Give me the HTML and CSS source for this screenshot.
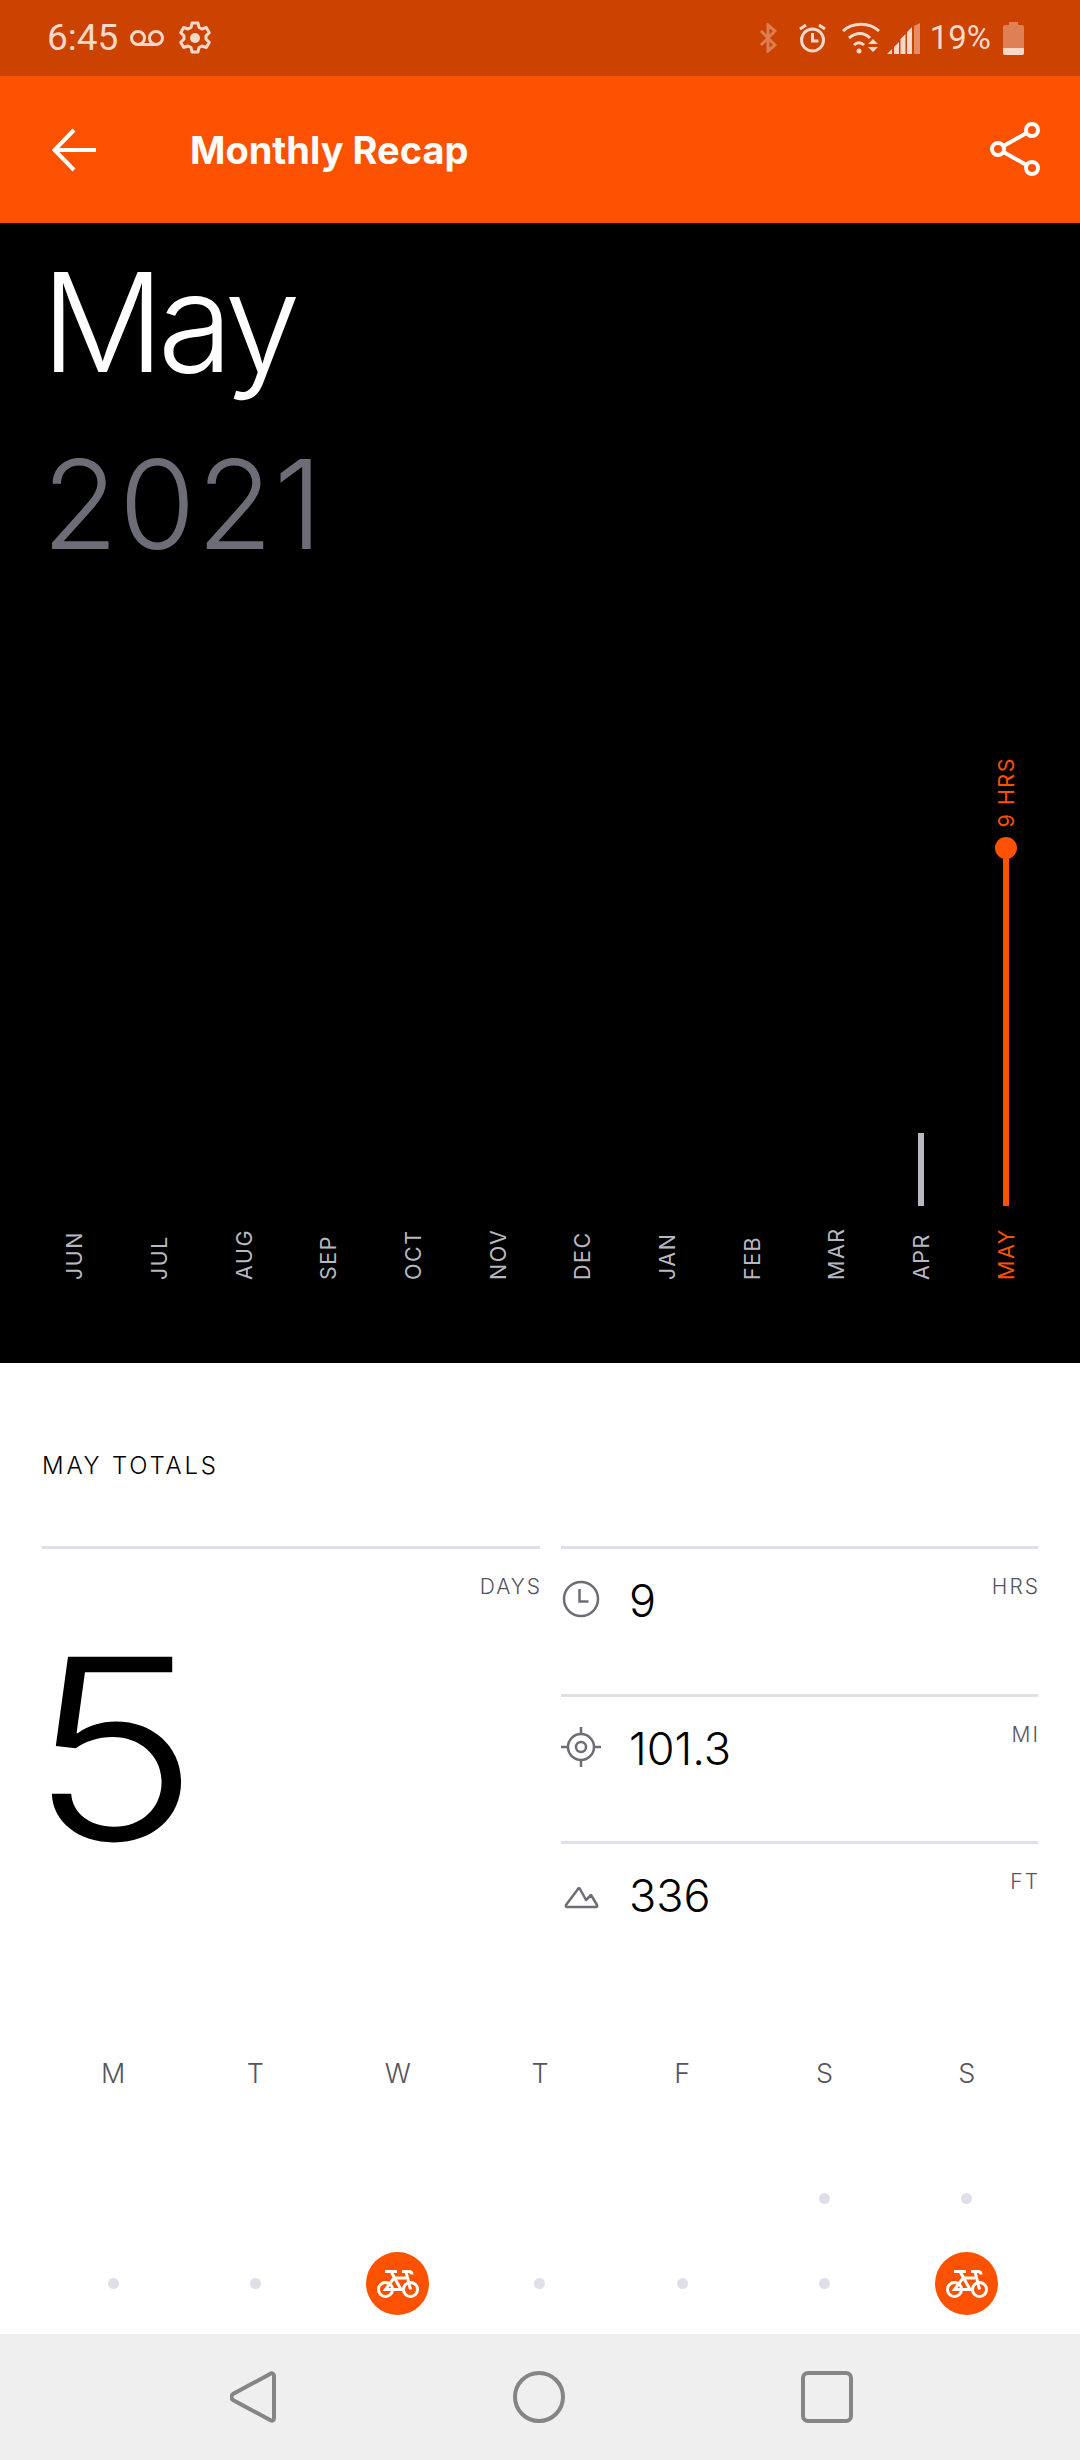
FILE: index.html
```html
<!DOCTYPE html>
<html lang="en">
<head>
  <meta charset="UTF-8">
  <meta name="viewport" content="width=device-width, initial-scale=1.0">
  <title>Monthly Recap</title>
  <link rel="stylesheet" href="styles.css">
</head>
<body>
  <svg class="defs" width="0" height="0" aria-hidden="true">
    <!-- bike glyph used in the calendar -->
    <symbol id="bike" viewBox="0 0 42 28">
      <g fill="none" stroke="#fff" stroke-width="3">
        <circle cx="8.500" cy="19.500" r="7"/>
        <circle cx="33.500" cy="19.500" r="7"/>
        <path d="M8 1.500h12M14 1.500l10 18H8.500L17 8h12M25 1.500h7q3 0 3 3M29 1.500l4.500 18"/>
      </g>
    </symbol>
  </svg>

  <div class="status-bar">
    <div class="status-left">
      <span class="clock">6:45</span>
      <svg class="voicemail" width="36" height="16" viewBox="0 0 36 16">
        <g fill="none" stroke="currentColor" stroke-width="3">
          <circle cx="9" cy="8" r="6.500"/>
          <circle cx="27" cy="8" r="6.500"/>
          <path d="M9 14.500h18"/>
        </g>
      </svg>
      <svg class="gear" width="34" height="34" viewBox="0 0 34 34">
        <path d="M14 2h6l1 4.500 3 1.500 4.300-1.500 3 5.200-3.300 3.100v3.400l3.300 3.100-3 5.200-4.300-1.500-3 1.500-1 4.500h-6l-1-4.500-3-1.500-4.300 1.500-3-5.200 3.300-3.100v-3.400L2.700 11.700l3-5.200L10 8l3-1.500z" fill="none" stroke="currentColor" stroke-width="3" stroke-linejoin="round"/>
        <circle cx="17" cy="17" r="5" fill="currentColor"/>
      </svg>
    </div>
    <div class="status-right">
      <svg class="bt" width="18" height="30" viewBox="0 0 18 30">
        <path d="M2 8l14 14-7 6V2l7 6L2 22" fill="none" stroke="currentColor" stroke-width="3"/>
      </svg>
      <svg class="alarm" width="27" height="30" viewBox="0 0 27 30">
        <g fill="none" stroke="currentColor" stroke-width="3">
          <circle cx="13.500" cy="17" r="11"/>
          <path d="M13.500 10v8h6M1 6l6-4M26 6l-6-4"/>
        </g>
      </svg>
      <svg class="wifi" width="38" height="32" viewBox="0 0 38 32">
        <g fill="none" stroke="currentColor" stroke-width="3">
          <path d="M1 9c10-9 26-9 36 0M7 16c7-6 15-6 21 0M12 23c3-3 7-3 10 0"/>
        </g>
        <circle cx="17" cy="29" r="2.500" fill="currentColor"/>
        <path d="M26 22l5-5 5 5zM26 25h10l-5 5z" fill="currentColor"/>
      </svg>
      <svg class="signal" width="33" height="31" viewBox="0 0 33 31">
        <path d="M0 31l5-5v5zM7 31V24l5-5v12zM13.500 31V16l5-5v20zM20 31V9l5-5v27z" fill="currentColor"/>
        <path d="M27 31V3l6-3v31z" fill="currentColor" opacity="0.5"/>
      </svg>
      <span class="battery-pct">19%</span>
      <div class="battery"><div class="battery-cap"></div><div class="battery-body"><div class="battery-level"></div></div></div>
    </div>
  </div>

  <header class="toolbar">
    <svg class="back" width="44" height="44" viewBox="0 0 44 44">
      <path d="M44 22H3M22 2L2.500 22 22 42" fill="none" stroke="#fff" stroke-width="4"/>
    </svg>
    <h1 class="title">Monthly Recap</h1>
    <svg class="share" width="52" height="54" viewBox="0 0 52 54">
      <g fill="none" stroke="#fff" stroke-width="4">
        <circle cx="8" cy="27" r="6"/>
        <circle cx="42" cy="8" r="6"/>
        <circle cx="42" cy="46" r="6"/>
        <path d="M13.500 24l23-13M13.500 30l23 13"/>
      </g>
    </svg>
  </header>

  <section class="hero">
    <div class="month">May</div>
    <div class="year">2021</div>
    <div class="chart">
      <div class="col"><div class="plot"></div><span class="col-label">JUN</span></div>
      <div class="col"><div class="plot"></div><span class="col-label">JUL</span></div>
      <div class="col"><div class="plot"></div><span class="col-label">AUG</span></div>
      <div class="col"><div class="plot"></div><span class="col-label">SEP</span></div>
      <div class="col"><div class="plot"></div><span class="col-label">OCT</span></div>
      <div class="col"><div class="plot"></div><span class="col-label">NOV</span></div>
      <div class="col"><div class="plot"></div><span class="col-label">DEC</span></div>
      <div class="col"><div class="plot"></div><span class="col-label">JAN</span></div>
      <div class="col"><div class="plot"></div><span class="col-label">FEB</span></div>
      <div class="col"><div class="plot"></div><span class="col-label">MAR</span></div>
      <div class="col">
        <div class="plot"><div class="bar" style="height: 73px"></div></div>
        <span class="col-label">APR</span>
      </div>
      <div class="col current">
        <div class="plot">
          <span class="bar-value">9 HRS</span>
          <div class="bar-dot"></div>
          <div class="bar" style="height: 358px"></div>
        </div>
        <span class="col-label">MAY</span>
      </div>
    </div>
  </section>

  <main class="totals">
    <h2 class="totals-title">MAY TOTALS</h2>
    <div class="stats">
      <div class="stat-main">
        <span class="unit">DAYS</span>
        <div class="big-number">5</div>
      </div>
      <div class="stat-list">
        <div class="stat">
          <svg class="stat-icon" width="40" height="40" viewBox="0 0 40 40">
            <g fill="none" stroke="#6d6d78" stroke-width="2.500">
              <circle cx="20" cy="20" r="17"/>
              <path d="M18.500 10v12.500h9"/>
            </g>
          </svg>
          <span class="value">9</span>
          <span class="unit">HRS</span>
        </div>
        <div class="stat">
          <svg class="stat-icon" width="40" height="40" viewBox="0 0 40 40">
            <g fill="none" stroke="#6d6d78" stroke-width="2.500">
              <circle cx="20" cy="20" r="13"/>
              <circle cx="20" cy="20" r="5"/>
              <path d="M20 0v7M20 33v7M0 20h7M33 20h7"/>
            </g>
          </svg>
          <span class="value">101.3</span>
          <span class="unit">MI</span>
        </div>
        <div class="stat">
          <svg class="stat-icon" width="40" height="40" viewBox="0 0 40 40">
            <path d="M6 33h29c1 0 1.500-1 1-2l-6-10-5 5-6-11c-.5-1-1.500-1-2 0L5 31c-.5 1 0 2 1 2z" fill="none" stroke="#6d6d78" stroke-width="2.500" stroke-linejoin="round"/>
          </svg>
          <span class="value">336</span>
          <span class="unit">FT</span>
        </div>
      </div>
    </div>

    <div class="calendar">
      <div class="weekday">M</div><div class="weekday">T</div><div class="weekday">W</div><div class="weekday">T</div><div class="weekday">F</div><div class="weekday">S</div><div class="weekday">S</div>

      <div class="day"></div><div class="day"></div><div class="day"></div><div class="day"></div><div class="day"></div>
      <div class="day"><i class="dot"></i></div><div class="day"><i class="dot"></i></div>

      <div class="day"><i class="dot"></i></div><div class="day"><i class="dot"></i></div>
      <div class="day"><div class="ride"><svg width="42" height="28"><use href="#bike"/></svg></div></div>
      <div class="day"><i class="dot"></i></div><div class="day"><i class="dot"></i></div><div class="day"><i class="dot"></i></div>
      <div class="day"><div class="ride"><svg width="42" height="28"><use href="#bike"/></svg></div></div>
    </div>
  </main>

  <nav class="nav-bar">
    <svg width="46" height="52" viewBox="0 0 46 52">
      <path d="M40 3c2-1.500 4-.5 4 2v42c0 2.500-2 3.500-4 2L3 29c-2-1.500-2-4.500 0-6z" fill="none" stroke="#858585" stroke-width="4"/>
    </svg>
    <div class="nav-circle"></div>
    <div class="nav-square"></div>
  </nav>
</body>
</html>
```

FILE: styles.css
```css
* {
  box-sizing: border-box;
}

html, body {
  height: 2460px;
}

body {
  margin: 0;
  display: flex;
  flex-direction: column;
  overflow: hidden;
  background: #fff;
  font-family: Inter, "Liberation Sans", sans-serif;
  color: #000;
}

.defs {
  position: absolute;
}

/* status bar */
.status-bar {
  height: 76px;
  flex: none;
  display: flex;
  justify-content: space-between;
  align-items: center;
  padding: 0 56px 0 47px;
  background: #cc4200;
  color: #f6d9cb;
  font-family: Roboto, sans-serif;
}

.status-left,
.status-right {
  display: flex;
  align-items: center;
}

.clock {
  font-size: 37px;
  line-height: 76px;
}

.voicemail {
  margin-left: 11px;
}

.gear {
  margin-left: 13px;
}

.bt {
  opacity: 0.4;
}

.alarm {
  margin-left: 22px;
}

.wifi {
  margin-left: 16px;
}

.signal {
  margin-left: 7px;
}

.battery-pct {
  margin-left: 10px;
  font-size: 33px;
  line-height: 76px;
}

.battery {
  width: 21px;
  height: 33px;
  margin-left: 12px;
  display: flex;
  flex-direction: column;
  align-items: center;
}

.battery-cap {
  width: 9px;
  height: 3px;
  background: #de7f55;
}

.battery-body {
  flex: 1;
  display: flex;
  align-items: flex-end;
  background: #de7f55;
  border-radius: 2px;
  width: 100%;
  overflow: hidden;
}

.battery-level {
  width: 100%;
  height: 7px;
  background: #f6d9cb;
}

/* toolbar */
.toolbar {
  height: 147px;
  flex: none;
  display: flex;
  align-items: center;
  padding: 0 38px 0 52px;
  background: #fc5200;
}

.title {
  margin: 0 0 0 94px;
  flex: 1;
  font-size: 38px;
  font-weight: 700;
  color: #fff;
}

.share {
  margin-bottom: 2px;
}

/* black part with the month chart */
.hero {
  height: 1140px;
  flex: none;
  display: flex;
  flex-direction: column;
  background: #000;
  padding-top: 19px;
}

.month {
  margin-left: 41px;
  font-size: 137px;
  font-weight: 350;
  letter-spacing: -6.500px;
  line-height: 160px;
  color: #fff;
}

.year {
  margin-left: 42px;
  margin-top: 27px;
  font-size: 124px;
  font-weight: 350;
  letter-spacing: 1px;
  line-height: 150px;
  color: #6d6d78;
}

.chart {
  margin-top: auto;
  padding: 0 32px 83px;
  display: grid;
  grid-template-columns: repeat(12, 1fr);
}

.col {
  display: flex;
  flex-direction: column;
  align-items: center;
  color: #b8b8c0;
}

.col.current {
  color: #fc5200;
}

.plot {
  height: 448px;
  display: flex;
  flex-direction: column;
  justify-content: flex-end;
  align-items: center;
}

.bar {
  width: 6px;
  flex: none;
  background: currentColor;
}

.bar-dot {
  width: 22px;
  height: 22px;
  margin-bottom: -11px;
  flex: none;
  border-radius: 50%;
  background: currentColor;
  position: relative;
}

.bar-value,
.col-label {
  writing-mode: vertical-rl;
  transform: rotate(180deg);
  font-size: 21.500px;
  letter-spacing: 1.500px;
  line-height: 24px;
  white-space: nowrap;
}

.bar-value {
  flex: none;
  margin-bottom: 10px;
}

.col-label {
  height: 74px;
  text-align: left;
}

/* white part */
.totals {
  flex: 1;
  min-height: 0;
  overflow: hidden;
  padding: 88px 42px 0;
}

.totals-title {
  margin: 0;
  font-size: 24px;
  font-weight: 300;
  letter-spacing: 2.800px;
  line-height: 30px;
}

.stats {
  margin-top: 65px;
  display: flex;
  gap: 21px;
}

.stat-main {
  width: 498px;
  height: 304px;
  border-top: 3px solid #dfdfe8;
  padding-top: 25px;
  display: flex;
  flex-direction: column;
  align-items: flex-end;
}

.big-number {
  align-self: flex-start;
  margin: 19px 0 0 -13px;
  font-size: 252px;
  font-weight: 350;
  line-height: 260px;
  transform: scaleX(1.14);
  transform-origin: left;
}

.stat-list {
  flex: 1;
}

.stat {
  height: 147.500px;
  border-top: 3px solid #dfdfe8;
  display: flex;
  align-items: flex-start;
}

.stat-icon {
  margin-top: 30px;
  flex: none;
}

.value {
  flex: 1;
  margin: 22px 0 0 28px;
  font-size: 45px;
  font-weight: 350;
  line-height: 60px;
}

.unit {
  margin: 25px -2px 0 0;
  font-size: 21px;
  font-weight: 300;
  letter-spacing: 2px;
  line-height: 26px;
  color: #55555f;
}

.stat-main .unit {
  margin-top: 0;
}

.calendar {
  margin-top: 67.500px;
  display: grid;
  grid-template-columns: repeat(7, 1fr);
  grid-template-rows: 100px;
  grid-auto-rows: 85px;
}

.weekday {
  text-align: center;
  font-size: 27px;
  font-weight: 300;
  line-height: 36px;
  color: #55555f;
}

.day {
  display: flex;
  align-items: center;
  justify-content: center;
}

.dot {
  width: 11px;
  height: 11px;
  border-radius: 50%;
  background: #dfdfe8;
}

.ride {
  width: 63px;
  height: 63px;
  border-radius: 50%;
  background: #fc5200;
  display: flex;
  align-items: center;
  justify-content: center;
}

/* system navigation */
.nav-bar {
  height: 126px;
  flex: none;
  display: flex;
  align-items: center;
  justify-content: space-between;
  padding: 0 227px 0 230px;
  background: #efefef;
}

.nav-circle {
  width: 52px;
  height: 52px;
  border: 4px solid #858585;
  border-radius: 50%;
}

.nav-square {
  width: 52px;
  height: 52px;
  border: 4px solid #858585;
  border-radius: 7px;
}
```
